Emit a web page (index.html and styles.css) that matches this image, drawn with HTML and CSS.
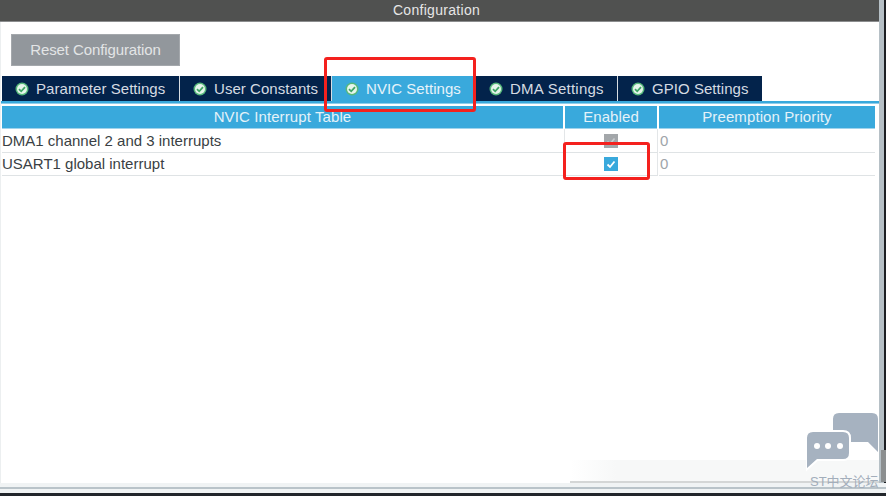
FILE: index.html
```html
<!DOCTYPE html>
<html lang="en">
<head>
<meta charset="utf-8">
<title>Configuration</title>
<link rel="stylesheet" href="styles.css">
</head>
<body>
<div class="page">
  <div class="upper">
    <div class="main">
      <header class="title">Configuration</header>
      <div class="toolbar"><button class="reset">Reset Configuration</button></div>
      <nav class="tabs">
        <div class="tab t1"><svg class="ok" viewBox="0 0 14 14"><circle cx="7" cy="7" r="6.5" fill="#57b87b"/><circle cx="7" cy="7" r="5" fill="#e6f5eb"/><path d="M4 7.2 6.2 9.3 10 5.2" fill="none" stroke="#3fa565" stroke-width="1.8"/></svg>Parameter Settings</div>
        <div class="tab t2"><svg class="ok" viewBox="0 0 14 14"><circle cx="7" cy="7" r="6.5" fill="#57b87b"/><circle cx="7" cy="7" r="5" fill="#e6f5eb"/><path d="M4 7.2 6.2 9.3 10 5.2" fill="none" stroke="#3fa565" stroke-width="1.8"/></svg>User Constants</div>
        <div class="tab t3 active"><svg class="ok" viewBox="0 0 14 14"><circle cx="7" cy="7" r="6.5" fill="#57b87b"/><circle cx="7" cy="7" r="5" fill="#e6f5eb"/><path d="M4 7.2 6.2 9.3 10 5.2" fill="none" stroke="#3fa565" stroke-width="1.8"/></svg>NVIC Settings</div>
        <div class="tab t4"><svg class="ok" viewBox="0 0 14 14"><circle cx="7" cy="7" r="6.5" fill="#57b87b"/><circle cx="7" cy="7" r="5" fill="#e6f5eb"/><path d="M4 7.2 6.2 9.3 10 5.2" fill="none" stroke="#3fa565" stroke-width="1.8"/></svg>DMA Settings</div>
        <div class="tab t5"><svg class="ok" viewBox="0 0 14 14"><circle cx="7" cy="7" r="6.5" fill="#57b87b"/><circle cx="7" cy="7" r="5" fill="#e6f5eb"/><path d="M4 7.2 6.2 9.3 10 5.2" fill="none" stroke="#3fa565" stroke-width="1.8"/></svg>GPIO Settings</div>
      </nav>
      <div class="rule"></div>
      <div class="grid">
        <div class="th">NVIC Interrupt Table</div>
        <div class="th">Enabled</div>
        <div class="th">Preemption Priority</div>
        <div class="td name">DMA1 channel 2 and 3 interrupts</div>
        <div class="td chk"><span class="box off"><svg viewBox="0 0 14 14"><path d="M3.5 7.5 6 10 10.5 4.5" fill="none" stroke="#c9cccf" stroke-width="1.6"/></svg></span></div>
        <div class="td num">0</div>
        <div class="td name r2">USART1 global interrupt</div>
        <div class="td chk"><span class="box on"><svg viewBox="0 0 14 14"><path d="M3.5 7.5 6 10 10.5 4.5" fill="none" stroke="#fff" stroke-width="1.8"/></svg></span></div>
        <div class="td num r2">0</div>
      </div>
    </div>
    <div class="edge"></div>
  </div>
  <div class="bottom"></div>
  <div class="wm-band"></div>
  <div class="wm-line"></div>
  <div class="wm-patch"></div>
  <div class="mark m1"></div>
  <div class="mark m2"></div>
  <svg class="wm-icon" viewBox="0 0 80 64">
    <path d="M33 1H66Q72 1 72 7V40L62 30H27V7Q27 1 33 1Z" fill="#a6b2c0"/>
    <path d="M7 20H37Q43 20 43 26V41Q43 47 37 47H11L1 56V26Q1 20 7 20Z" fill="#a6b2c0" stroke="#fff" stroke-width="4" paint-order="stroke"/>
    <circle cx="11" cy="34" r="3" fill="#fff"/><circle cx="22" cy="34" r="3" fill="#fff"/><circle cx="34" cy="34" r="3" fill="#fff"/>
  </svg>
  <div class="wm-text">ST中文论坛</div>
</div>
</body>
</html>
```
FILE: styles.css
```css
* { box-sizing: border-box; }
html, body { margin: 0; padding: 0; }
body { width: 886px; height: 496px; overflow: hidden; background: #fff; font-family: "Liberation Sans", Arial, sans-serif; }
.page { position: relative; width: 886px; height: 496px; display: flex; flex-direction: column; }
.upper { flex: 1; display: flex; min-height: 0; }
.main { flex: 1; display: flex; flex-direction: column; border-left: 1px solid #eceff0; }
.title { height: 22px; margin-left: -1px; background: #505150; color: #e6e6e6; font-size: 14px; line-height: 21px; text-align: center; padding-right: 6px; letter-spacing: .3px; border-bottom: 1px solid #8b8d8e; }
.toolbar { padding: 12px 0 0 10px; height: 54px; }
.reset { display: block; width: 169px; height: 32px; background: #92979c; border: 1px solid #a4a8ac; color: #e3e5e6; font: 15px "Liberation Sans", Arial, sans-serif; letter-spacing: -.1px; padding: 0 0 2px; }
.tabs { display: flex; height: 25px; padding-left: 1px; }
.tab { height: 25px; background: #03234b; color: #d5dbe2; font-size: 15px; letter-spacing: .05px; display: flex; align-items: center; border-right: 1px solid #d8dde2; white-space: nowrap; padding-left: 13px; }
.tab.t1 { width: 178px; } .tab.t2 { width: 152px; } .tab.t3 { width: 144px; }
.tab.t4 { width: 142px; letter-spacing: .25px; } .tab.t5 { width: 144px; border-right: 0; }
.tab.active { background: #39a9dc; color: #e6f3fa; border-right: 0; }
.ok { width: 14px; height: 14px; margin-right: 7px; flex: none; }
.rule { height: 3px; background: #39a9dc; border-bottom: 1px solid #8fcdea; }
.grid { display: grid; grid-template-columns: 561px 92px 216px; grid-template-rows: 23px 24px 23px; column-gap: 2px; margin: 2px 0 0 1px; }
.th { background: #39a9dc; color: #e4f2f9; font-size: 15px; line-height: 22px; text-align: center; letter-spacing: .1px; border-bottom: 1px solid #9fd3ec; }
.td { border-bottom: 1px solid #dfe3e5; font-size: 15px; line-height: 23px; color: #3a3f44; white-space: nowrap; }
.td.r2 { line-height: 21px; }
.chk { display: flex; align-items: center; justify-content: center; margin: 0 -1px; border-left: 1px solid #e3e6e8; border-right: 1px solid #e3e6e8; }
.num { color: #9ea5aa; padding-left: 1px; }
.box { display: block; width: 14px; height: 14px; }
.box svg { display: block; width: 14px; height: 14px; }
.box.off { background: #a3a7aa; }
.box.on { background: #39a9dc; }
.edge { width: 7px; flex: none; background: linear-gradient(90deg, #b6c0c6 0 5px, #1d2024 5px); }
.bottom { height: 13px; flex: none; background: linear-gradient(#f0f3f4 0 4px, #b9c3c9 4px 6px, #f0f3f4 6px 10.5px, #22262b 10.5px); }
.mark { position: absolute; border: 3px solid #f4211e; border-radius: 3px; }
.m1 { left: 324px; top: 57px; width: 152px; height: 55px; }
.m2 { left: 563px; top: 142px; width: 87px; height: 38px; }
.wm-band { position: absolute; left: 570px; top: 460px; width: 309px; height: 22px; background: linear-gradient(90deg, #fff, #f7f8f8 15%); }
.wm-line { position: absolute; left: 570px; top: 481px; width: 309px; height: 2px; background: #d4d6d6; }
.wm-patch { position: absolute; left: 881px; top: 450px; width: 5px; height: 32px; background: #8c8f90; }
.wm-icon { position: absolute; left: 806px; top: 412px; width: 80px; height: 64px; }
.wm-text { position: absolute; left: 810px; top: 471px; font: 13px "Liberation Sans", "Noto Sans CJK SC", sans-serif; color: #a3aebb; white-space: nowrap; }
```
